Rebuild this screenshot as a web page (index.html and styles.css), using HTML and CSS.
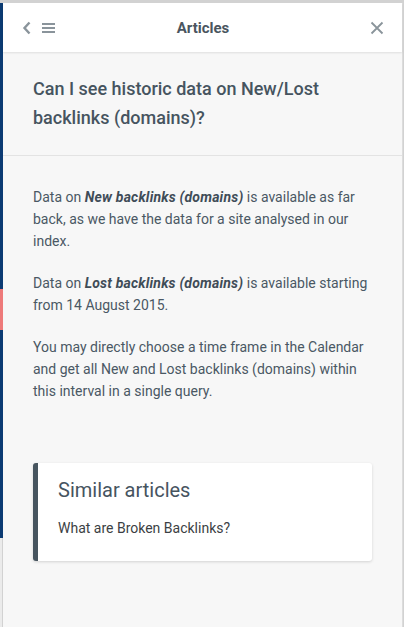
FILE: index.html
```html
<!DOCTYPE html>
<html lang="en">
<head>
    <meta charset="UTF-8">
    <meta name="viewport" content="width=device-width, initial-scale=1.0">
    <title>Articles</title>
    <link rel="stylesheet" href="styles.css">
</head>
<body>
    <div class="page">
        <div class="page-edge">
            <div class="edge-blue edge-top"></div>
            <div class="edge-pink"></div>
            <div class="edge-blue edge-bottom"></div>
            <div class="edge-gray"></div>
        </div>

        <div class="widget">
            <div class="header">
                <div class="header-left">
                    <svg class="icon" width="10" height="14" viewBox="0 0 10 14">
                        <path d="M7.5 1.5 L2.5 7 L7.5 12.5" fill="none" stroke="#8a949b" stroke-width="2.4"/>
                    </svg>
                    <svg class="icon" width="14" height="12" viewBox="0 0 14 12">
                        <rect x="0" y="1" width="13" height="2" fill="#8a949b"/>
                        <rect x="0" y="5" width="13" height="2" fill="#8a949b"/>
                        <rect x="0" y="9" width="13" height="2" fill="#8a949b"/>
                    </svg>
                </div>
                <h1>Articles</h1>
                <svg class="icon close" width="14" height="14" viewBox="0 0 14 14">
                    <path d="M1.5 1.5 L12.5 12.5 M12.5 1.5 L1.5 12.5" fill="none" stroke="#8a949b" stroke-width="1.8"/>
                </svg>
            </div>

            <div class="question">
                <h2>Can I see historic data on New/Lost backlinks (domains)?</h2>
            </div>

            <div class="answer">
                <p>Data on <b class="em">New backlinks (domains)</b> is available as far back, as we have the data for a site analysed in our index.</p>
                <p>Data on <b class="em">Lost backlinks (domains)</b> is available starting from 14 August 2015.</p>
                <p>You may directly choose a time frame in the Calendar and get all New and Lost backlinks (domains) within this interval in a single query.</p>

                <div class="similar">
                    <h3>Similar articles</h3>
                    <a href="#">What are Broken Backlinks?</a>
                </div>
            </div>
        </div>
    </div>
</body>
</html>
```

FILE: styles.css
```css
body {
    margin: 0;
    padding: 0;
    font-family: Roboto, "Liberation Sans", sans-serif;
    background: #d2d2d2;
}
.page {
    display: flex;
    margin-top: 3px;
    height: 624px;
    overflow: hidden;
}
.page-edge {
    width: 3px;
    display: flex;
    flex-direction: column;
}
.edge-blue {
    background: #0c3b73;
}
.edge-top {
    height: 286px;
}
.edge-pink {
    height: 41px;
    background: #ee7a7a;
}
.edge-bottom {
    height: 208px;
}
.edge-gray {
    flex: 1;
    background: #ebebeb;
    border-right: 1px solid #d2d2d2;
}
.widget {
    flex: 1;
    background: #f7f7f7;
    border-right: 1px solid #dcdcdc;
    margin-right: 1px;
}
.header {
    height: 49px;
    background: #fff;
    display: flex;
    align-items: center;
    padding: 0 18px 0 19px;
    box-shadow: 0 1px 2px rgba(0, 0, 0, 0.1);
}
.header-left {
    display: flex;
    align-items: center;
    gap: 10px;
    width: 60px;
}
.header h1 {
    flex: 1;
    margin: 0;
    text-align: center;
    font-size: 15px;
    font-weight: bold;
    color: #4a5560;
}
.header .close {
    width: 14px;
    margin-left: 46px;
}
.question {
    padding: 22px 30px 23px 30px;
    border-bottom: 1px solid #e3e3e3;
}
.question h2 {
    margin: 0;
    font-size: 18px;
    font-weight: 500;
    line-height: 29px;
    color: #46545f;
}
.answer {
    padding: 30px 30px 0 30px;
}
.answer p {
    margin: 0 0 20px 0;
    font-size: 14px;
    line-height: 22px;
    color: #4a5864;
}
.answer p .em {
    color: #3f4c57;
    font-style: italic;
    letter-spacing: 0.2px;
}
.similar {
    margin-top: 61px;
    background: #fff;
    border-left: 5px solid #47555f;
    border-radius: 3px;
    box-shadow: 0 1px 3px rgba(0, 0, 0, 0.15);
    padding: 13px 20px 22px 20px;
}
.similar h3 {
    margin: 0 0 13px 0;
    font-size: 20px;
    font-weight: normal;
    line-height: 28px;
    color: #46545f;
}
.similar a {
    display: block;
    font-size: 14px;
    line-height: 22px;
    color: #3c3f44;
    text-decoration: none;
}
```
